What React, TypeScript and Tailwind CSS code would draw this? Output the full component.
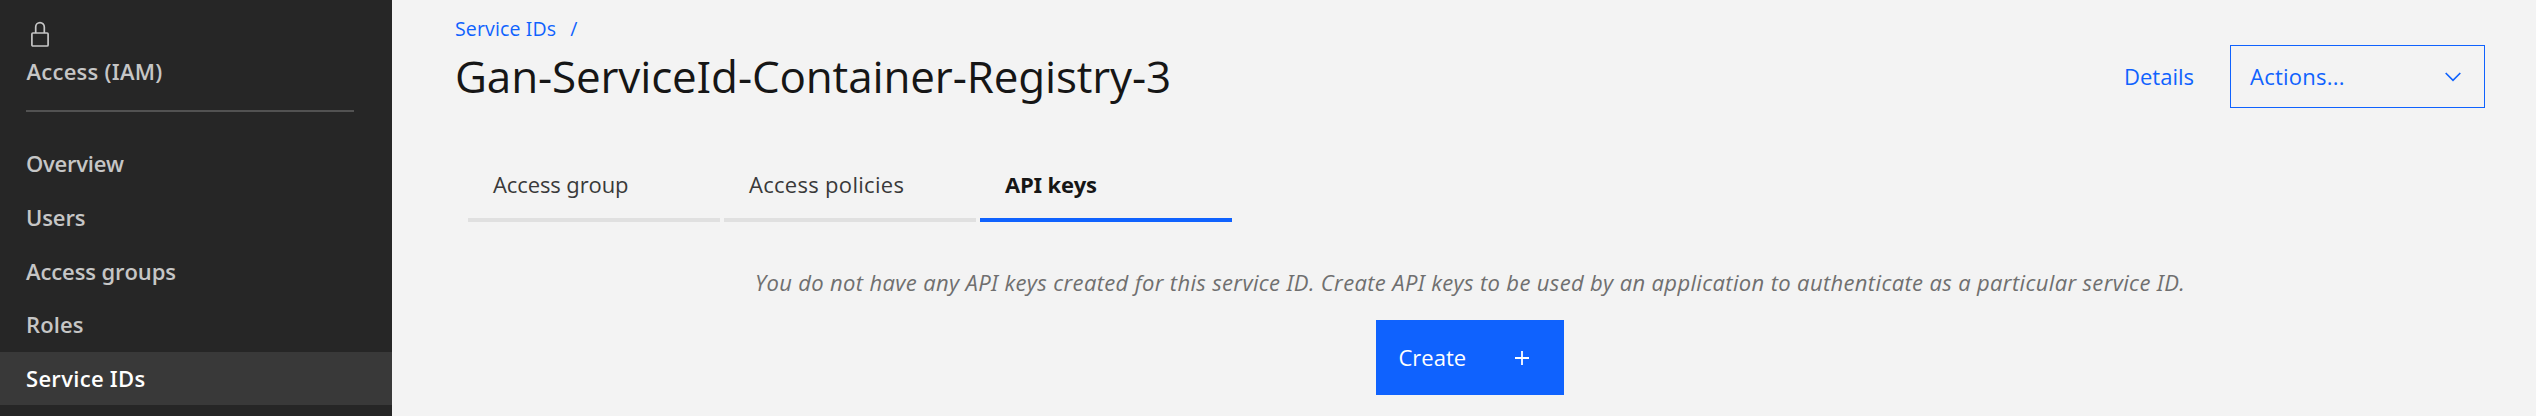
type NavItem = { label: string; tracking: string; active?: boolean };

const navItems: NavItem[] = [
  { label: "Overview", tracking: "tracking-[-0.25px]" },
  { label: "Users", tracking: "tracking-[-0.1px]" },
  { label: "Access groups", tracking: "tracking-[-0.1px]" },
  { label: "Roles", tracking: "tracking-[0.1px]" },
  { label: "Service IDs", tracking: "tracking-[0.3px]", active: true },
];

const tabs: NavItem[] = [
  { label: "Access group", tracking: "tracking-[-0.1px]" },
  { label: "Access policies", tracking: "tracking-[0.3px]" },
  { label: "API keys", tracking: "tracking-[-0.2px]", active: true },
];

function LockIcon() {
  return (
    <svg className="ml-[5px] block h-[27px] w-[18px]" viewBox="0 0 18 27" fill="none" stroke="#c6c6c6" strokeWidth="1.7">
      <path d="M4.7 12V6a4.3 4.3 0 0 1 8.6 0v6" />
      <rect x="0.9" y="12" width="16.2" height="13" rx="1" />
    </svg>
  );
}

function Sidebar() {
  return (
    <aside className="h-full w-[392px] shrink-0 overflow-hidden bg-[#262626] pt-[21px] font-semibold text-[#c6c6c6]">
      <div className="ml-[26px] h-[91px] w-[328px] border-b-2 border-[#525252]">
        <LockIcon />
        <div className="mt-[8px] pl-[0.5px] leading-[31px] tracking-[0.25px]">Access (IAM)</div>
      </div>
      <nav className="mt-[25.4px]">
        {navItems.map((item) => (
          <a
            key={item.label}
            className={`block h-[53.6px] pl-[26px] leading-[53.4px] ${item.tracking} ${item.active ? "bg-[#393939] text-white" : ""}`}
          >
            {item.label}
          </a>
        ))}
      </nav>
    </aside>
  );
}

function Header() {
  return (
    <header className="flex justify-between pr-[51px] pl-[63px]">
      <div>
        <div className="flex gap-[14px] pt-[14px] text-[19.5px] leading-[30px] text-[#0f62fe]">
          <a className="tracking-[0.15px]">Service IDs</a>
          <span>/</span>
        </div>
        <h1 className="mt-[2px] text-[44px] leading-[60px] tracking-[-0.15px] text-[#161616]">
          Gan-ServiceId-Container-Registry-3
        </h1>
      </div>
      <div className="mt-[45px] flex h-[63px] items-center text-[#0f62fe]">
        <a className="mr-[36px]">Details</a>
        <button className="flex h-[63px] w-[255px] items-center justify-between border border-[#0f62fe] pr-[23px] pl-[19px]">
          <span className="tracking-[0.25px]">Actions...</span>
          <svg className="h-[10px] w-[16px]" viewBox="0 0 16 10" fill="none" stroke="#0f62fe" strokeWidth="1.7">
            <path d="M0.7 1 8 8.3 15.3 1" />
          </svg>
        </button>
      </div>
    </header>
  );
}

export default function App() {
  return (
    <div className="flex h-[416px] w-full overflow-hidden bg-[#f3f3f3] font-['Open_Sans','Noto_Sans',sans-serif] text-[22px] [font-feature-settings:'ss01']">
      <Sidebar />
      <main className="min-w-0 flex-1">
        <Header />
        <div className="mt-[54px] ml-[76px] flex gap-[3.6px]">
          {tabs.map((tab) => (
            <a
              key={tab.label}
              className={`block h-[60px] w-[252.4px] border-b-4 pl-[25px] leading-[44px] ${tab.tracking} ${
                tab.active ? "border-[#0f62fe] font-bold text-[#161616]" : "border-[#e0e0e0] text-[#393939]"
              }`}
            >
              {tab.label}
            </a>
          ))}
        </div>
        <div className="flex flex-col items-center pt-[45px] pl-[12px]">
          <p className="leading-[31px] tracking-[0.35px] text-[#6f6f6f] italic">
            You do not have any API keys created for this service ID. Create API keys to be used by an application to
            authenticate as a particular service ID.
          </p>
          <button className="mt-[22px] flex h-[75px] w-[188px] items-center justify-between bg-[#0f62fe] pr-[35px] pl-[22.5px] text-white">
            <span className="-mt-[1px]">Create</span>
            <svg className="h-[14px] w-[14px]" viewBox="0 0 14 14" stroke="white" strokeWidth="1.8">
              <path d="M7 0v14M0 7h14" />
            </svg>
          </button>
        </div>
      </main>
    </div>
  );
}
